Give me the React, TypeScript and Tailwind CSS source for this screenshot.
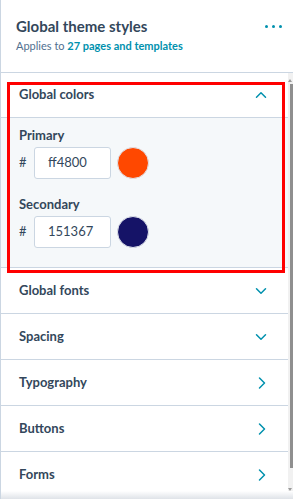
import { ChevronDown, ChevronRight, ChevronUp } from 'lucide-react'

const font = { fontFamily: '"Lato", "Noto Sans", sans-serif' }

type Swatch = { label: string; hex: string }

const swatches: Swatch[] = [
  { label: 'Primary', hex: 'ff4800' },
  { label: 'Secondary', hex: '151367' },
]

const sections = [
  { title: 'Global fonts', kind: 'down' },
  { title: 'Spacing', kind: 'down' },
  { title: 'Typography', kind: 'right' },
  { title: 'Buttons', kind: 'right' },
  { title: 'Forms', kind: 'right' },
]

function ColorField({ swatch }: { swatch: Swatch }) {
  return (
    <div>
      <div className="text-[13px] leading-[16px] font-bold text-[#33475b]">{swatch.label}</div>
      <div className="mt-[4px] flex items-center">
        <span className="w-[15px] text-[13px] text-[#33475b]">#</span>
        <div className="flex h-[32px] w-[77px] items-center rounded-[3px] border border-[#cbd6e2] bg-white pl-[13px] text-[13px] text-[#33475b]">
          {swatch.hex}
        </div>
        <div
          className="ml-[6px] h-[32px] w-[32px] rounded-full border border-[#dfe3eb]"
          style={{ backgroundColor: `#${swatch.hex}` }}
        />
      </div>
    </div>
  )
}

export default function App() {
  return (
    <div className="relative h-[499px] w-[293px] overflow-hidden border-l border-[#cbd6e2] bg-white" style={font}>
      <header className="flex h-[73px] flex-col border-b border-[#cbd6e2] pl-[15px] pr-[11px] pt-[16px]">
        <div className="flex items-center justify-between">
          <h1 className="text-[15px] leading-[20px] font-bold text-[#33475b]">Global theme styles</h1>
          <div className="flex gap-[4px]">
            <span className="h-[3px] w-[3px] rounded-full bg-[#0091ae]" />
            <span className="h-[3px] w-[3px] rounded-full bg-[#0091ae]" />
            <span className="h-[3px] w-[3px] rounded-full bg-[#0091ae]" />
          </div>
        </div>
        <p className="mt-[3px] text-[11px] leading-[14px] text-[#516f90]">
          Applies to <span className="font-bold text-[#0091ae]">27 pages and templates</span>
        </p>
      </header>

      <div className="flex">
        <div className="w-[287px]">
          <section className="border-b border-[#cbd6e2]">
            <div className="flex h-[45px] items-center justify-between border-b border-[#cbd6e2] pl-[18px] pr-[18px]">
              <span className="text-[13px] font-bold text-[#33475b]">Global colors</span>
              <ChevronUp className="h-[18px] w-[18px] text-[#0091ae]" strokeWidth={2} />
            </div>
            <div className="flex h-[149px] flex-col gap-[17px] bg-[#f5f8fa] pl-[18px] pt-[9px]">
              {swatches.map((swatch) => (
                <ColorField key={swatch.label} swatch={swatch} />
              ))}
            </div>
          </section>

          {sections.map((section) => (
            <div
              key={section.title}
              className={`flex h-[46px] items-center justify-between border-b border-[#cbd6e2] pl-[18px] ${
                section.kind === 'down' ? 'pr-[18px]' : 'pr-[16px]'
              }`}
            >
              <span className="text-[13px] font-bold text-[#33475b]">{section.title}</span>
              {section.kind === 'down' ? (
                <ChevronDown className="h-[18px] w-[18px] text-[#0091ae]" strokeWidth={2} />
              ) : (
                <ChevronRight className="h-[20px] w-[20px] text-[#0091ae]" strokeWidth={1.8} />
              )}
            </div>
          ))}
        </div>

        <div className="flex w-[5px] flex-col items-end bg-[#f1f1f1]">
          <div className="mr-[1px] mt-[6px] h-0 w-0 border-x-[2px] border-b-[3px] border-x-transparent border-b-[#9a9a9a]" />
          <div className="mt-[2px] h-[384px] w-[3px] bg-[#8f8f8f]" />
          <div className="mr-[1px] mt-[20px] h-0 w-0 border-x-[2px] border-t-[3px] border-x-transparent border-t-[#9a9a9a]" />
        </div>
      </div>

      <div className="pointer-events-none absolute left-[6px] top-[82px] h-[191px] w-[278px] border-[3px] border-[#ff0000]" />
      <div className="pointer-events-none absolute bottom-0 left-0 h-[8px] w-full bg-gradient-to-b from-white to-[#dfe3e8]" />
    </div>
  )
}
